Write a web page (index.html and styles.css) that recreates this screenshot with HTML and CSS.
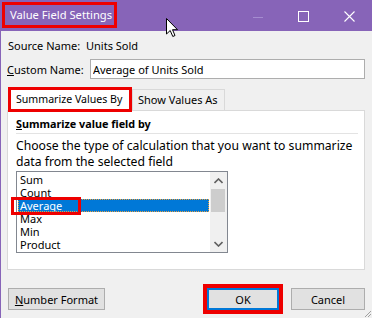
FILE: index.html
```html
<!DOCTYPE html>
<html lang="en">
<head>
    <meta charset="UTF-8">
    <title>Value Field Settings</title>
    <link rel="stylesheet" href="styles.css">
</head>
<body>
    <div class="window">
        <div class="titlebar">
            <div class="title">Value Field Settings</div>
            <div class="controls">
                <span class="ctl ctl-min"><svg width="10" height="10" viewBox="0 0 10 10"><line x1="0" y1="5.5" x2="10" y2="5.5" stroke="#a58cd0" stroke-width="1"/></svg></span>
                <span class="ctl ctl-max"><svg width="11" height="11" viewBox="0 0 11 11"><rect x="0.5" y="0.5" width="10" height="10" fill="none" stroke="#fff" stroke-width="1"/></svg></span>
                <span class="ctl ctl-close"><svg width="11" height="11" viewBox="0 0 11 11"><path d="M0.5 0.5 L10.5 10.5 M10.5 0.5 L0.5 10.5" stroke="#fff" stroke-width="1.1"/></svg></span>
            </div>
        </div>

        <div class="content">
            <div class="row source">
                <span class="label">Source Name:</span>
                <span>Units Sold</span>
            </div>
            <div class="row custom">
                <label for="customName" class="label"><u>C</u>ustom Name:</label>
                <input id="customName" type="text" value="Average of Units Sold">
            </div>

            <div class="tabs">
                <div class="tab active">Summarize Values By</div>
                <div class="tab">Show Values As</div>
            </div>

            <div class="panel">
                <div class="panel-heading"><u>S</u>ummarize value field by</div>
                <p class="hint">Choose the type of calculation that you want to summarize<br>data from the selected field</p>
                <div class="listbox">
                    <ul class="items">
                        <li>Sum</li>
                        <li>Count</li>
                        <li class="selected">Average</li>
                        <li>Max</li>
                        <li>Min</li>
                        <li>Product</li>
                    </ul>
                    <div class="scrollbar">
                        <span class="arrow"><svg width="9" height="6" viewBox="0 0 9 6"><path d="M0.5 5 L4.5 1 L8.5 5" fill="none" stroke="#606060" stroke-width="1.6"/></svg></span>
                        <span class="thumb"></span>
                        <span class="track"></span>
                        <span class="arrow"><svg width="9" height="6" viewBox="0 0 9 6"><path d="M0.5 1 L4.5 5 L8.5 1" fill="none" stroke="#606060" stroke-width="1.6"/></svg></span>
                    </div>
                    <div class="mark"></div>
                </div>
            </div>

            <div class="buttons">
                <button class="btn btn-format"><u>N</u>umber Format</button>
                <div class="btn-group">
                    <button class="btn btn-ok">OK</button>
                    <button class="btn btn-cancel">Cancel</button>
                </div>
            </div>
        </div>

        <svg class="cursor" width="13" height="20" viewBox="0 0 13 20"><path d="M0.5 0.5 L0.5 16 L4.2 12.5 L6.8 18.5 L9 17.5 L6.5 11.7 L11.5 11.7 Z" fill="#fff" stroke="#000" stroke-width="1"/></svg>
        <svg class="grip" width="8" height="8" viewBox="0 0 8 8"><path d="M7 1 L1 7 M7 4 L4 7" stroke="#a0a0a0" stroke-width="1"/></svg>
    </div>
</body>
</html>
```

FILE: styles.css
```css
body {
    margin: 0;
    font-family: 'Segoe UI', 'Noto Sans', 'Open Sans', sans-serif;
    font-size: 11px;
    color: #000;
}

.window {
    position: relative;
    width: 371px;
    height: 318px;
    background: #f0f0f0;
    border-left: 1px solid #8764b8;
    overflow: hidden;
    white-space: nowrap;
}

.titlebar {
    height: 31px;
    background: #8764b8;
    display: flex;
    align-items: flex-start;
    justify-content: space-between;
}

.title {
    margin: 2px 0 0 1px;
    width: 104px;
    height: 20px;
    padding: 0 0 0 5px;
    line-height: 20px;
    border: 3px solid #ee0000;
    color: #fff;
    font-size: 11.2px;
    overflow: hidden;
}

.controls {
    display: flex;
    padding-top: 10px;
}

.ctl {
    display: block;
    height: 11px;
}

.ctl-min { margin-right: 35px; }
.ctl-max { margin-right: 35px; }
.ctl-close { margin-right: 17px; }

.content {
    padding: 6px 7px 0 6px;
}

.row {
    display: flex;
    align-items: center;
}

.row .label {
    flex-shrink: 0;
}

.source {
    height: 16px;
    margin-left: 1px;
}

.source .label {
    width: 78px;
}

.custom {
    height: 20px;
    margin-top: 6px;
}

.custom .label {
    width: 83px;
}

.custom input {
    flex-shrink: 0;
    width: 275px;
    height: 20px;
    margin: 0;
    padding: 0 2px;
    box-sizing: border-box;
    border: 1px solid #adadad;
    font: inherit;
    background: #fff;
}

.tabs {
    display: flex;
    align-items: flex-end;
    height: 23px;
    margin-top: 8px;
    margin-left: 1px;
}

.tab {
    height: 20px;
    line-height: 20px;
    padding: 0 6px 0 5px;
    border: 1px solid #d9d9d9;
    border-bottom: none;
    background: #f0f0f0;
}

.tab.active {
    position: relative;
    z-index: 1;
    box-sizing: border-box;
    height: 25px;
    line-height: 19px;
    width: 124px;
    padding: 0 0 0 5px;
    border: 3px solid #ee0000;
    background: #fff;
    margin-bottom: -2px;
    font-size: 10.6px;
}

.panel {
    height: 160px;
    box-sizing: border-box;
    border: 1px solid #d9d9d9;
    background: #fff;
    padding: 5px 6px 0 8px;
}

.panel-heading {
    font-weight: bold;
    font-size: 10.8px;
    line-height: 16px;
    padding-bottom: 1px;
    border-bottom: 1px solid #e3e3e3;
}

.hint {
    margin: 4px 0 0;
    line-height: 16px;
    font-size: 12.2px;
}

.listbox {
    position: relative;
    display: flex;
    width: 210px;
    height: 80px;
    margin-top: 1px;
    border: 1px solid #828790;
}

.items {
    list-style: none;
    margin: 0;
    padding: 1px 1px 0;
    flex: 1;
}

.items li {
    height: 13px;
    line-height: 13px;
    padding-left: 2px;
}

.items li.selected {
    background: #0078d7;
    color: #fff;
    outline: 1px dotted #e8a040;
    outline-offset: -1px;
}

.scrollbar {
    width: 17px;
    display: flex;
    flex-direction: column;
    background: #f0f0f0;
}

.arrow {
    height: 17px;
    display: flex;
    align-items: center;
    justify-content: center;
}

.thumb {
    height: 23px;
    margin: 0 2px 0 1px;
    background: #cdcdcd;
}

.track {
    flex: 1;
}

.mark {
    position: absolute;
    left: -6px;
    top: 25px;
    width: 64px;
    height: 12px;
    border: 3px solid #ee0000;
}

.buttons {
    display: flex;
    justify-content: space-between;
    margin-top: 18px;
}

.btn {
    height: 22px;
    margin: 0;
    padding: 0;
    font: inherit;
    color: #000;
    background: #e1e1e1;
    border: 1px solid #adadad;
}

.btn-format {
    width: 97px;
    margin-left: 1px;
}

.btn-group {
    display: flex;
    gap: 12px;
}

.btn-ok {
    width: 72px;
    border: 2px solid #0078d7;
    outline: 4px solid #ee0000;
}

.btn-cancel {
    width: 74px;
}

.cursor {
    position: absolute;
    left: 165px;
    top: 18px;
}

.grip {
    position: absolute;
    right: 0;
    bottom: 0;
}
```
